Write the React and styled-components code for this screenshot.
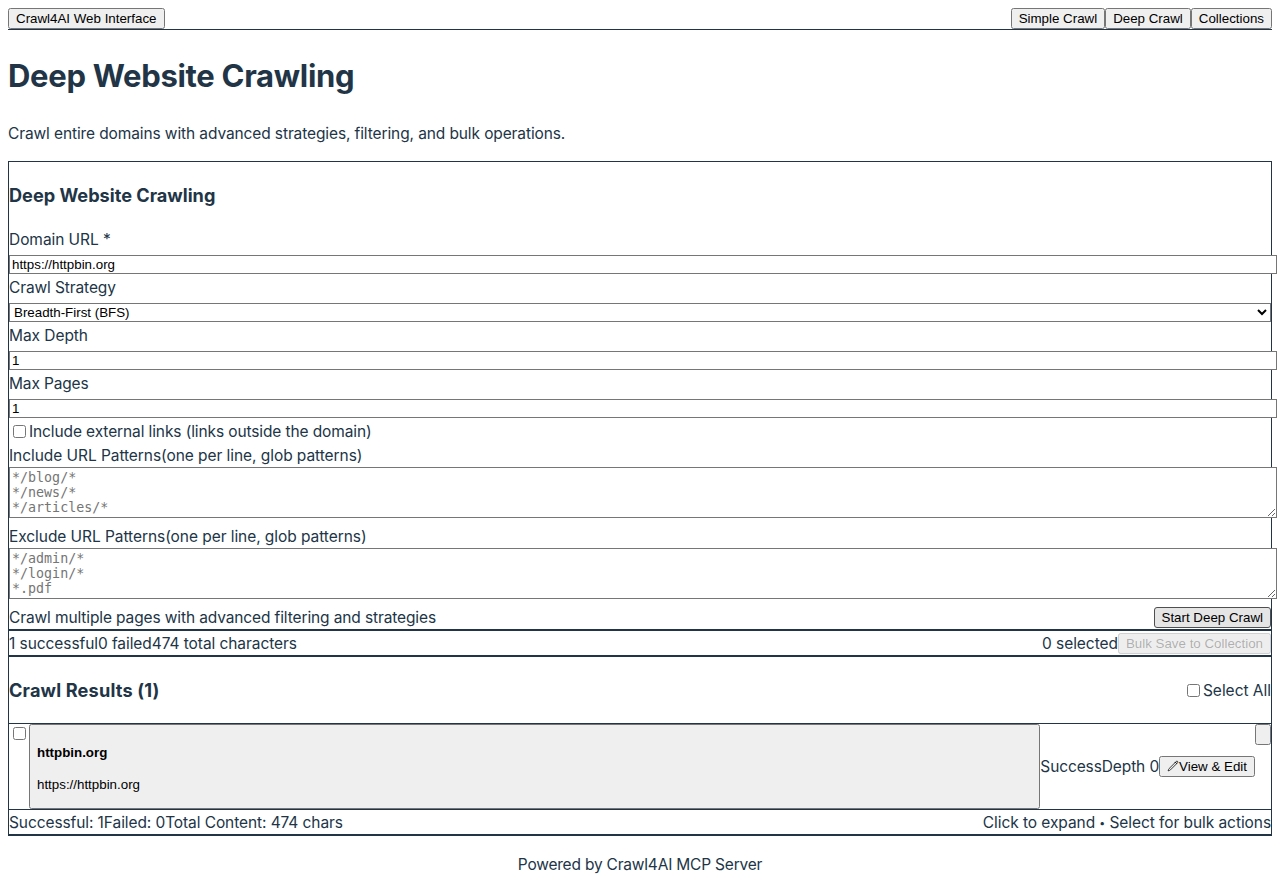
import React from 'react';
import styled, { createGlobalStyle } from 'styled-components';

const ink = '#213547';
const fieldBorder = '#767676';

const GlobalStyle = createGlobalStyle`
  body {
    margin: 0;
    background: #fff;
    color: ${ink};
    font-family: Inter, 'Liberation Sans', sans-serif;
    font-size: 16px;
    line-height: 1.5;
  }
`;

const Page = styled.div`
  padding: 8px 8px 0;
`;

const Header = styled.header`
  display: flex;
  justify-content: space-between;
  border-bottom: 1px solid ${ink};
`;

const Nav = styled.nav`
  display: flex;
`;

const Button = styled.button`
  font-family: 'Liberation Sans', Arial, sans-serif;
  font-size: 13.3333px;
`;

const PrimaryButton = styled(Button)`
  padding: 2px 7px;
  border: 1px solid #4f4f4f;
  border-radius: 3px;
  background: #e5e5e5;
  color: #000;
`;

const Title = styled.h1`
  margin: 0.67em 0;
  font-size: 32px;

  span {
    font-size: 31px;
    line-height: 0;
    letter-spacing: -0.3px;
    vertical-align: -1px;
  }
`;

const Paragraph = styled.p`
  margin: 16px 0;
`;

const Panel = styled.section`
  border: 1px solid ${ink};
`;

const Heading = styled.h3`
  margin: 1em 0;
  font-size: 18.72px;

  span {
    font-size: 18.15px;
    line-height: 0;
    letter-spacing: ${(p) => p.$track || '0'};
    vertical-align: -1px;
  }
`;

const Line = styled.div``;

const Glyphs = styled.span`
  font-size: 15.5px;
  line-height: 0;
  letter-spacing: ${(p) => p.$track || '-0.11px'};
`;

const Bullet = styled.span`
  font-size: 10.5px;
  vertical-align: 1px;
`;

const Input = styled.input`
  width: 100%;
  box-sizing: content-box;
  border: 1px solid ${fieldBorder};
  background: #fff;
  color: #000;
  font-family: 'Liberation Sans', Arial, sans-serif;
  font-size: 13.3333px;
`;

const Select = styled.select`
  width: 100%;
  border: 1px solid ${fieldBorder};
  border-radius: 0;
  background: #fff;
  color: #000;
  font-family: 'Liberation Sans', Arial, sans-serif;
  font-size: 13.3333px;
`;

const Textarea = styled.textarea`
  width: 100%;
  box-sizing: content-box;
  border: 1px solid ${fieldBorder};
  background: #fff;
  font-family: monospace;

  &::placeholder {
    color: #757575;
  }
`;

const CheckLabel = styled.label`
  display: flex;
  align-items: center;
`;

const Bar = styled.div`
  display: flex;
  align-items: center;
  justify-content: space-between;
  border-bottom: ${(p) => (p.$ruled ? `1px solid ${ink}` : '0')};
`;

const Group = styled.div`
  display: flex;
  align-items: center;
`;

const ResultRow = styled.div`
  display: flex;
  align-items: flex-start;
  border-bottom: 1px solid ${ink};
`;

const ResultMain = styled.div`
  display: flex;
  flex: 1;
  align-items: center;
`;

const ResultButton = styled(Button)`
  flex: 1;
  text-align: left;

  h4 {
    margin: 1.33em 0;
  }

  p {
    margin: 1em 0;
  }
`;

const IconButton = styled(Button)`
  display: flex;
  align-items: center;
`;

const ToggleButton = styled(Button)`
  width: 16px;
  height: 21px;
`;

const Footer = styled.footer`
  text-align: center;
`;

const PencilIcon = () => (
  <svg width="12" height="12" viewBox="0 0 24 24" fill="none" stroke="currentColor" strokeWidth="1.5" strokeLinecap="round" strokeLinejoin="round">
    <path d="m16.862 4.487 1.687-1.688a1.875 1.875 0 1 1 2.652 2.652L6.832 19.82a4.5 4.5 0 0 1-1.897 1.13l-2.685.8.8-2.685a4.5 4.5 0 0 1 1.13-1.897L16.863 4.487Zm0 0L19.5 7.125" />
  </svg>
);

const Text = ({ track, children }) => (
  <Line>
    <Glyphs $track={track}>{children}</Glyphs>
  </Line>
);

const Field = ({ label, track = '-0.06px', children }) => (
  <div>
    <label>
      <Text track={track}>{label}</Text>
    </label>
    {children}
  </div>
);

export default function App() {
  return (
    <Page>
      <GlobalStyle />
      <Header>
        <Button>Crawl4AI Web Interface</Button>
        <Nav>
          <Button>Simple Crawl</Button>
          <Button>Deep Crawl</Button>
          <Button>Collections</Button>
        </Nav>
      </Header>
      <main>
        <Title>
          <span>Deep Website Crawling</span>
        </Title>
        <Paragraph>
          <Glyphs>Crawl entire domains with advanced strategies, filtering, and bulk operations.</Glyphs>
        </Paragraph>
        <Panel>
          <Heading>
            <span>Deep Website Crawling</span>
          </Heading>
          <Field label="Domain URL *">
            <Input type="url" defaultValue="https://httpbin.org" />
          </Field>
          <Field label="Crawl Strategy" track="-0.11px">
            <Select defaultValue="bfs">
              <option value="bfs">Breadth-First (BFS)</option>
            </Select>
          </Field>
          <Field label="Max Depth">
            <Input type="number" defaultValue="1" />
          </Field>
          <Field label="Max Pages" track="-0.15px">
            <Input type="number" defaultValue="1" />
          </Field>
          <CheckLabel>
            <input type="checkbox" />
            <Text>Include external links (links outside the domain)</Text>
          </CheckLabel>
          <Field label="Include URL Patterns(one per line, glob patterns)">
            <Textarea rows={3} placeholder={'*/blog/*\n*/news/*\n*/articles/*'} />
          </Field>
          <Field label="Exclude URL Patterns(one per line, glob patterns)">
            <Textarea rows={3} placeholder={'*/admin/*\n*/login/*\n*.pdf'} />
          </Field>
          <Bar>
            <Text track="-0.12px">Crawl multiple pages with advanced filtering and strategies</Text>
            <PrimaryButton>Start Deep Crawl</PrimaryButton>
          </Bar>
        </Panel>
        <Panel>
          <Bar>
            <Group>
              <Text track="-0.07px">1 successful</Text>
              <Text track="-0.07px">0 failed</Text>
              <Text track="-0.07px">474 total characters</Text>
            </Group>
            <Group>
              <Text track="-0.05px">0 selected</Text>
              <Button disabled>Bulk Save to Collection</Button>
            </Group>
          </Bar>
        </Panel>
        <Panel>
          <Bar $ruled>
            <Heading $track="0.17px">
              <span>Crawl Results (1)</span>
            </Heading>
            <CheckLabel>
              <input type="checkbox" />
              <Text track="-0.02px">Select All</Text>
            </CheckLabel>
          </Bar>
          <ResultRow>
            <input type="checkbox" />
            <ResultMain>
              <ResultButton>
                <h4>httpbin.org</h4>
                <p>https://httpbin.org</p>
              </ResultButton>
              <Text>Success</Text>
              <Text>Depth 0</Text>
              <IconButton>
                <PencilIcon />
                View &amp; Edit
              </IconButton>
            </ResultMain>
            <ToggleButton aria-label="Expand" />
          </ResultRow>
          <Bar $ruled>
            <Group>
              <Text track="-0.09px">Successful: 1</Text>
              <Text track="-0.09px">Failed: 0</Text>
              <Text track="-0.09px">Total Content: 474 chars</Text>
            </Group>
            <Text track="-0.07px">
              Click to expand <Bullet>•</Bullet> Select for bulk actions
            </Text>
          </Bar>
        </Panel>
      </main>
      <Footer>
        <Paragraph>
          <Glyphs $track="-0.2px">Powered by Crawl4AI MCP Server</Glyphs>
        </Paragraph>
      </Footer>
    </Page>
  );
}
